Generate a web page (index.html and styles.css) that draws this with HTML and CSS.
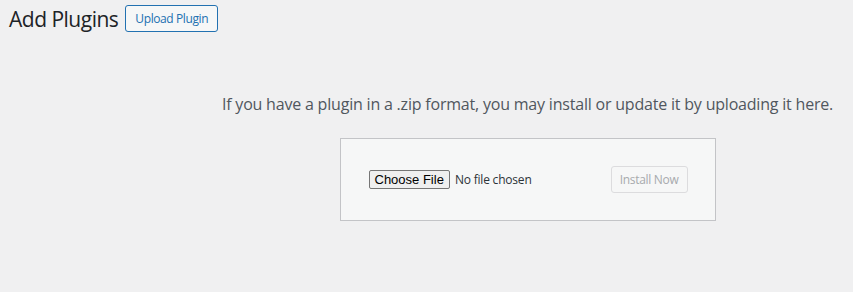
FILE: index.html
```html
<!DOCTYPE html>
<html>
<head>
    <meta charset="UTF-8">
    <meta name="viewport" content="width=device-width, initial-scale=1.0">
    <title>Add Plugins</title>
    <link rel="stylesheet" href="styles.css">
</head>
<body>
    <div class="wrap">
        <div class="page-head">
            <h1>Add Plugins</h1>
            <button class="upload-toggle">Upload Plugin</button>
        </div>
        <div class="upload-plugin">
            <p class="install-help">If you have a plugin in a .zip format, you may install or update it by uploading it here.</p>
            <form class="upload-form">
                <input type="file" id="pluginzip" name="pluginzip">
                <button type="submit" class="install-btn" disabled>Install Now</button>
            </form>
        </div>
    </div>
</body>
</html>
```

FILE: styles.css
```css
body {
    margin: 0;
    height: 100vh;
    background-color: #f0f0f1;
    font-family: "Open Sans", "Noto Sans", sans-serif;
    color: #1d2327;
}
.wrap {
    padding: 5px 0 0 9px;
}
.page-head {
    display: flex;
    align-items: center;
    gap: 7px;
}
h1 {
    margin: 0;
    font-size: 21px;
    font-weight: 400;
    letter-spacing: -0.5px;
    line-height: 26px;
}
.upload-toggle {
    height: 27px;
    padding: 0 9px;
    font-family: inherit;
    font-size: 12px;
    letter-spacing: -0.4px;
    color: #2271b1;
    background: #f6f7f7;
    border: 1px solid #2271b1;
    border-radius: 3px;
    cursor: pointer;
}
.upload-plugin {
    display: flex;
    flex-direction: column;
    align-items: center;
    padding-left: 193px;
}
.install-help {
    margin: 61px 0 0;
    font-size: 16px;
    letter-spacing: -0.2px;
    color: #50575e;
}
.upload-form {
    display: flex;
    align-items: center;
    justify-content: space-between;
    width: 319px;
    margin-top: 23px;
    padding: 27px 27px 27px 28px;
    border: 1px solid #c3c4c7;
    background: #f6f7f7;
}
input[type="file"] {
    font-family: "Open Sans", sans-serif;
    font-size: 12px;
    letter-spacing: -0.2px;
    color: #2c3338;
}
input[type="file"]::file-selector-button {
    font-family: "Liberation Sans", Arial, sans-serif;
    font-size: 13px;
    padding: 1px 5px;
    margin-right: 5px;
    border: 1px solid #767676;
    border-radius: 2px;
    background: #efefef;
    color: #000;
}
.install-btn {
    height: 27px;
    padding: 0 8px;
    font-family: inherit;
    font-size: 12px;
    letter-spacing: -0.3px;
    color: #a7aaad;
    background: #f6f7f7;
    border: 1px solid #dcdcde;
    border-radius: 3px;
}
```
